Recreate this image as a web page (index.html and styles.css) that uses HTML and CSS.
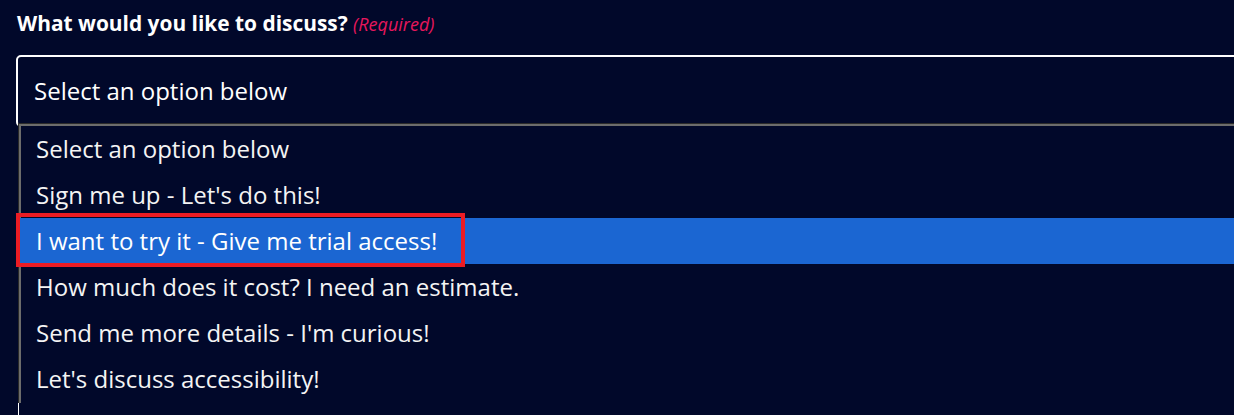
FILE: index.html
```html
<!DOCTYPE html>
<html lang="en">
<head>
    <meta charset="UTF-8">
    <meta name="viewport" content="width=device-width, initial-scale=1.0">
    <title>What would you like to discuss?</title>
    <link rel="stylesheet" href="styles.css">
</head>
<body>
    <div class="field">
        <label class="field-label">What would you like to discuss? <span class="required">(Required)</span></label>
        <div class="select-wrap">
            <div class="select-box">Select an option below</div>
            <ul class="options">
                <li>Select an option below</li>
                <li>Sign me up - Let's do this!</li>
                <li class="active">I want to try it - Give me trial access!<span class="callout"></span></li>
                <li>How much does it cost? I need an estimate.</li>
                <li>Send me more details - I'm curious!</li>
                <li>Let's discuss accessibility!</li>
            </ul>
            <div class="next-field"></div>
        </div>
    </div>
</body>
</html>
```

FILE: styles.css
```css
html, body {
    margin: 0;
    height: 100%;
    overflow: hidden;
}
body {
    background-color: #01082a;
    color: #ffffff;
    font-family: "Open Sans", "Liberation Sans", sans-serif;
}
.field {
    padding: 11px 0 0 16px;
}
.field-label {
    display: block;
    padding-left: 1px;
    font-size: 20.9px;
    font-weight: bold;
    line-height: 24px;
    margin-bottom: 19px;
}
.required {
    color: #e8175d;
    font-size: 18px;
    font-weight: normal;
    font-style: italic;
}
.select-wrap {
    position: relative;
}
.select-box {
    width: 1260px;
    border: 2px solid #ffffff;
    border-radius: 5px;
    padding: 20px 16px;
    font-size: 24px;
    line-height: 28px;
}
.next-field {
    margin-left: 2px;
    height: 320px;
    border-left: 1px solid #ffffff;
}
.options {
    position: absolute;
    top: 68px;
    left: 2px;
    width: 1260px;
    margin: 0;
    padding: 2px 0 1px 0;
    list-style: none;
    background-color: #01082a;
    border-top: 1px solid #2a2a2a;
    border-left: 1px solid #2a2a2a;
    box-shadow: inset 2px 2px 0 #6c6c6c;
}
.options li {
    position: relative;
    height: 46px;
    line-height: 46px;
    padding-left: 17px;
    font-size: 24px;
    color: #f4f4f4;
}
.options li.active {
    background-color: #1b66d2;
    color: #ffffff;
}
.callout {
    position: absolute;
    top: -5px;
    left: -3px;
    width: 449px;
    height: 54px;
    box-sizing: border-box;
    border: 4px solid #ec1c24;
}
```
